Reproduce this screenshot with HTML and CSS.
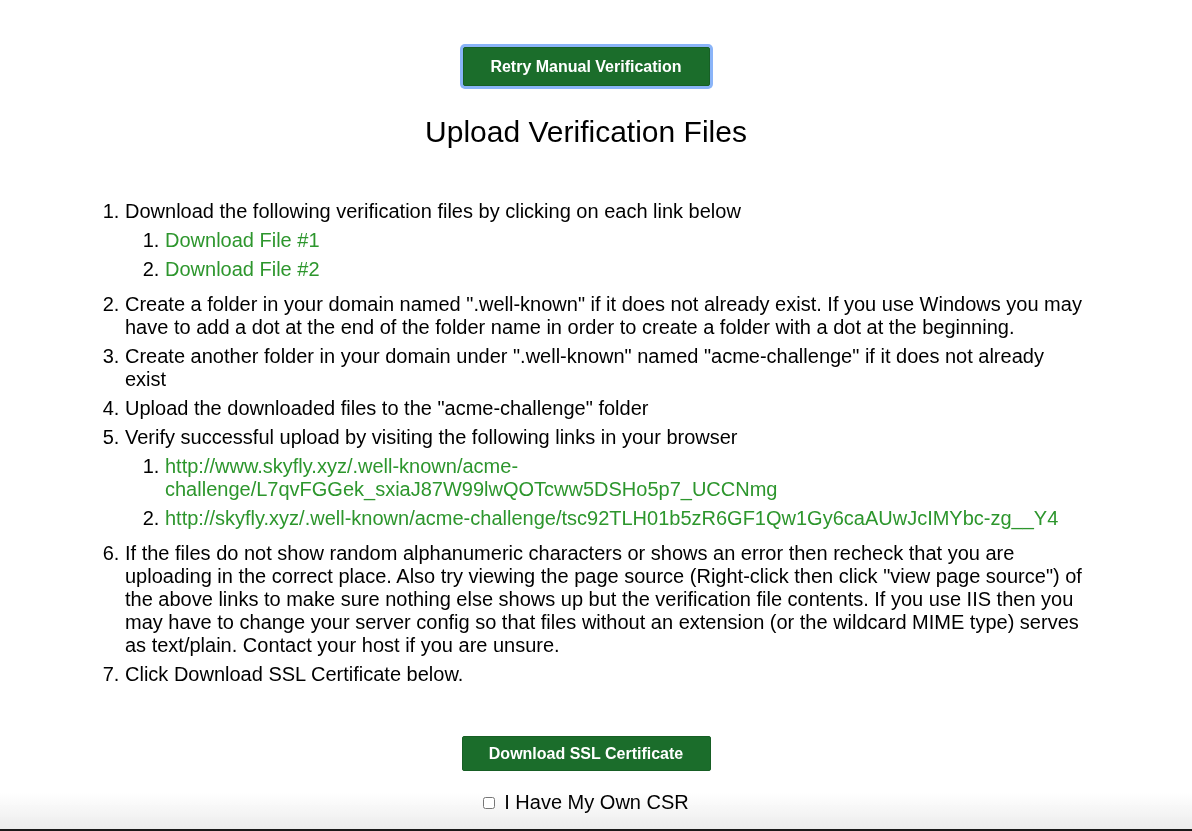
FILE: index.html
```html
<!DOCTYPE html>
<html lang="en">
<head>
<meta charset="utf-8">
<title>Upload Verification Files</title>
<link rel="stylesheet" href="styles.css">
</head>
<body>
<div class="page">
  <div class="center top">
    <button class="btn btn-focus" type="button">Retry Manual Verification</button>
  </div>
  <h2 class="title">Upload Verification Files</h2>
  <ol class="steps">
    <li>Download the following verification files by clicking on each link below
      <ol class="sub">
        <li><a href="#">Download File #1</a></li>
        <li><a href="#">Download File #2</a></li>
      </ol>
    </li>
    <li>Create a folder in your domain named ".well-known" if it does not already exist. If you use Windows you may have to add a dot at the end of the folder name in order to create a folder with a dot at the beginning.</li>
    <li>Create another folder in your domain under ".well-known" named "acme-challenge" if it does not already exist</li>
    <li>Upload the downloaded files to the "acme-challenge" folder</li>
    <li>Verify successful upload by visiting the following links in your browser
      <ol class="sub">
        <li><a href="#">http://www.skyfly.xyz/.well-known/acme-challenge/L7qvFGGek_sxiaJ87W99lwQOTcww5DSHo5p7_UCCNmg</a></li>
        <li><a href="#">http://skyfly.xyz/.well-known/acme-challenge/tsc92TLH01b5zR6GF1Qw1Gy6caAUwJcIMYbc-zg__Y4</a></li>
      </ol>
    </li>
    <li>If the files do not show random alphanumeric characters or shows an error then recheck that you are uploading in the correct place. Also try viewing the page source (Right-click then click "view page source") of the above links to make sure nothing else shows up but the verification file contents. If you use IIS then you may have to change your server config so that files without an extension (or the wildcard MIME type) serves as text/plain. Contact your host if you are unsure.</li>
    <li>Click Download SSL Certificate below.</li>
  </ol>
  <div class="center bottom">
    <button class="btn btn-dl" type="button">Download SSL Certificate</button>
    <label class="csr"><input type="checkbox" class="chk"> I Have My Own CSR</label>
  </div>
</div>
<div class="fade"></div>
</body>
</html>
```
FILE: styles.css
```css
html, body {
  margin: 0;
  padding: 0;
  background: #fff;
}
body {
  font-family: "Liberation Sans", Arial, Helvetica, sans-serif;
  color: #000;
  font-size: 20px;
}
.page {
  position: relative;
  z-index: 1;
  width: 1002px;
  margin-left: 85px;
}
.center {
  display: flex;
  flex-direction: column;
  align-items: center;
}
.top {
  padding-top: 47px;
}
.btn {
  font-family: "Liberation Sans", Arial, Helvetica, sans-serif;
  font-weight: bold;
  font-size: 16px;
  color: #fff;
  background: #1b6d2b;
  border: 1px solid #175f25;
  border-radius: 2px;
  width: 249px;
  cursor: pointer;
  padding: 0;
}
.btn-focus {
  height: 39px;
  width: 247px;
  box-shadow: 0 0 0 3px #8ab4f8;
  outline: none;
}
.btn-dl {
  height: 35px;
}
.title {
  font-size: 30px;
  font-weight: normal;
  text-align: center;
  margin: 29px 0 0 0;
  line-height: 34px;
}
.steps {
  margin: 51px 0 0 0;
  padding-left: 40px;
  line-height: 23px;
}
.steps > li {
  margin-bottom: 6px;
}
.sub {
  margin: 6px 0 12px 0;
  padding-left: 40px;
}
.sub > li {
  margin-bottom: 6px;
}
.sub > li:last-child {
  margin-bottom: 0;
}
.steps a {
  color: #2d962d;
  text-decoration: none;
}
.bottom {
  padding-top: 44px;
}
.csr {
  margin-top: 20px;
  display: flex;
  align-items: center;
  gap: 9px;
  font-size: 20px;
  line-height: 22px;
}
.chk {
  margin: 2px 0 0 0;
  width: 12px;
  height: 12px;
}
.fade {
  position: fixed;
  left: 0;
  right: 0;
  bottom: 0;
  height: 38px;
  z-index: 0;
  background: linear-gradient(to bottom, rgba(255,255,255,0), #ececec 36px, #1a1a1a 36px);
  pointer-events: none;
}
```
